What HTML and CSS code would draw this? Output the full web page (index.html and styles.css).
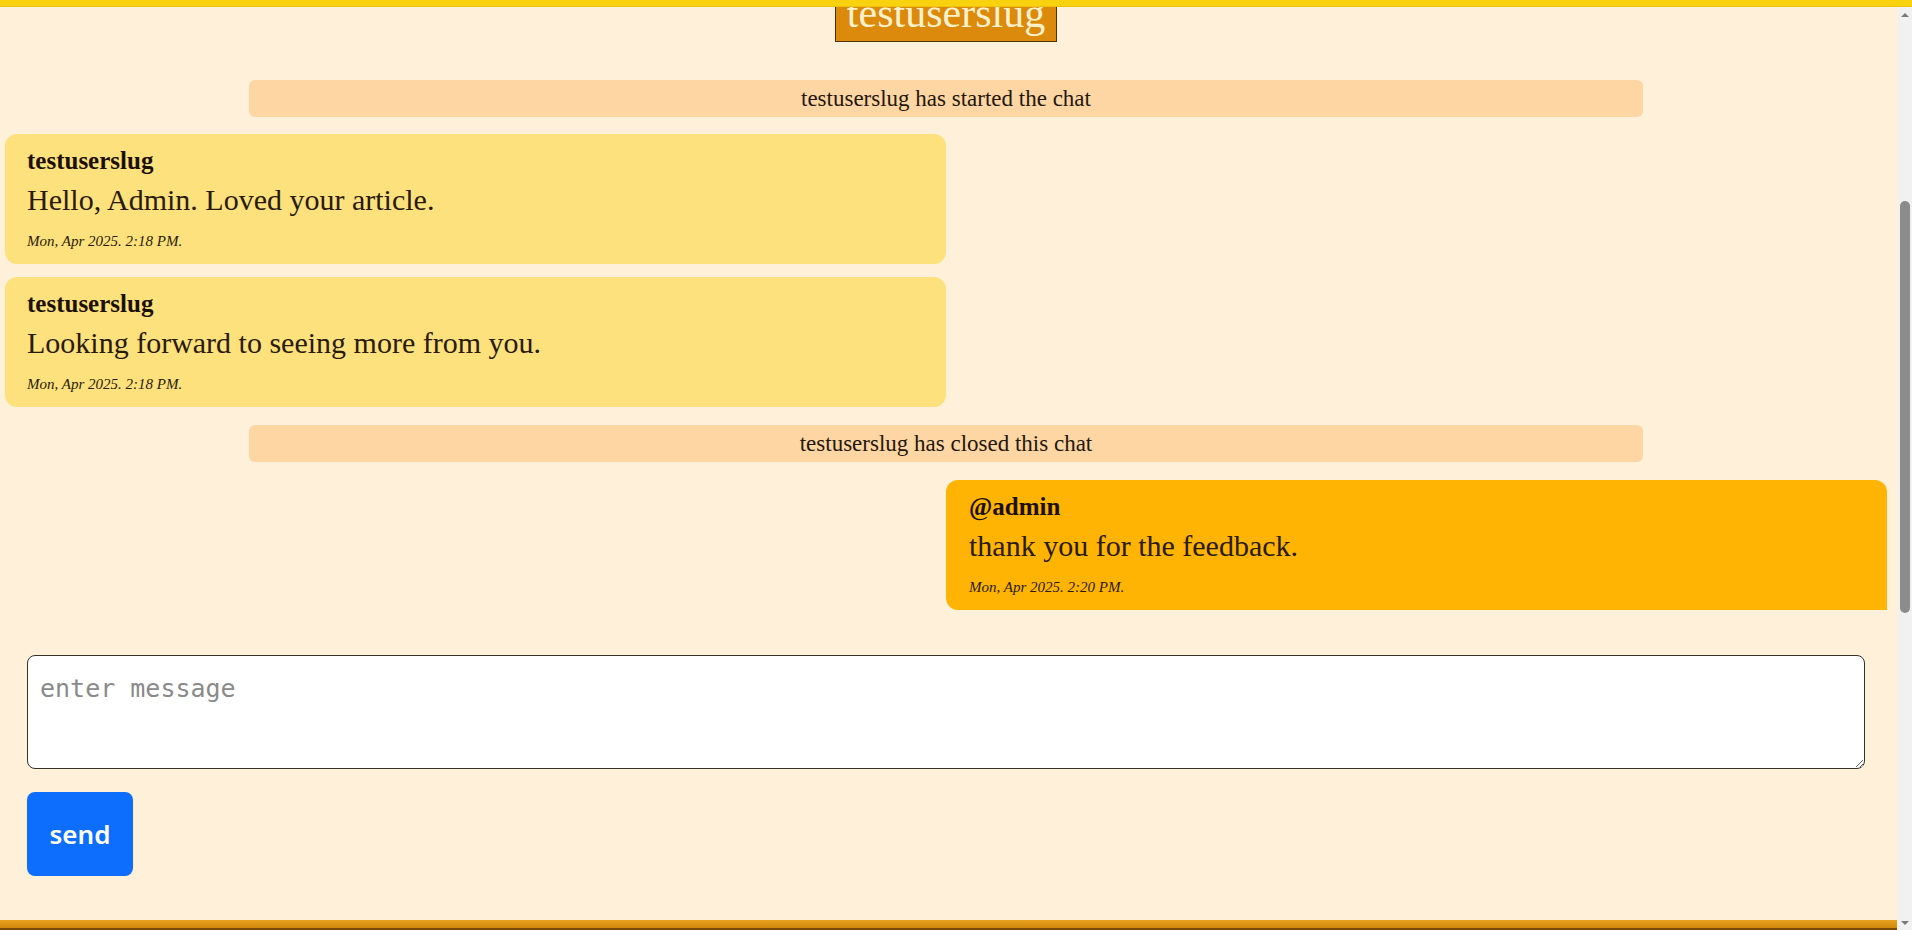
FILE: index.html
```html
<!DOCTYPE html>
<html lang="en">
<head>
<meta charset="utf-8">
<title>Chat - testuserslug</title>
<link rel="stylesheet" href="styles.css">
</head>
<body>
<div class="app">
  <div class="topbar"></div>
  <div class="frame">
    <div class="main">
      <div class="viewport">
        <div class="content">
          <div class="title-wrap"><h1 class="title">testuserslug</h1></div>

          <div class="system first">testuserslug has started the chat</div>

          <div class="bubble left gap-a">
            <div class="name">testuserslug</div>
            <div class="text">Hello, Admin. Loved your article.</div>
            <div class="time">Mon, Apr 2025. 2:18 PM.</div>
          </div>

          <div class="bubble left gap-b">
            <div class="name">testuserslug</div>
            <div class="text">Looking forward to seeing more from you.</div>
            <div class="time">Mon, Apr 2025. 2:18 PM.</div>
          </div>

          <div class="system">testuserslug has closed this chat</div>

          <div class="bubble right gap-a">
            <div class="name">@admin</div>
            <div class="text">thank you for the feedback.</div>
            <div class="time">Mon, Apr 2025. 2:20 PM.</div>
          </div>

          <form class="composer">
            <textarea class="input" placeholder="enter message"></textarea>
            <button type="button" class="send">send</button>
          </form>
        </div>
      </div>
      <div class="bottombar"></div>
    </div>
    <div class="scrollbar">
      <div class="arrow up"></div>
      <div class="track"><div class="thumb"></div></div>
      <div class="arrow down"></div>
    </div>
  </div>
</div>
</body>
</html>
```

FILE: styles.css
```css
* { box-sizing: border-box; }

html, body {
  margin: 0;
  padding: 0;
  height: 100%;
  overflow: hidden;
}

body {
  background: #fff0d9;
  font-family: "Liberation Serif", "Times New Roman", serif;
  color: #2a1a08;
}

.app {
  display: flex;
  flex-direction: column;
  height: 100vh;
}

.topbar {
  height: 7px;
  flex: none;
  background: #f9d20f;
  border-bottom: 1px solid #eec20c;
}

.frame {
  flex: 1;
  display: flex;
  min-height: 0;
}

.main {
  flex: 1;
  display: flex;
  flex-direction: column;
  min-width: 0;
}

.viewport {
  flex: 1;
  overflow: hidden;
  min-height: 0;
}

.content {
  display: flex;
  flex-direction: column;
  padding: 0 10px 0 5px;
}

.title-wrap {
  display: flex;
  justify-content: center;
  margin-top: -21px;
}

.title {
  margin: 0;
  font-weight: normal;
  font-size: 42px;
  line-height: 40px;
  padding: 6px 11px 8px 11px;
  background: #dc8a0b;
  color: #fef1cc;
  border: 1px solid #4d3208;
}

.system {
  align-self: center;
  width: 74.07%;
  height: 37px;
  line-height: 37px;
  text-align: center;
  font-size: 23px;
  background: #fed6a4;
  border-radius: 6px;
  color: #24170a;
  margin-top: 18px;
}

.system.first { margin-top: 38px; }

.bubble {
  width: 50%;
  padding: 12px 22px 13px 22px;
  border-radius: 12px;
}

.bubble.left {
  align-self: flex-start;
  background: #fde17d;
}

.bubble.right {
  align-self: flex-end;
  background: #ffb403;
  border-bottom-right-radius: 0;
  padding-left: 23px;
}

.gap-a { margin-top: 17px; }
.gap-b { margin-top: 13px; }
.bubble.right.gap-a { margin-top: 18px; }

.name {
  font-weight: bold;
  font-size: 25px;
  line-height: 30px;
  color: #1c1005;
}

.text {
  font-size: 30px;
  line-height: 36px;
  margin-top: 6px;
}

.time {
  font-style: italic;
  font-size: 15px;
  line-height: 20px;
  margin-top: 13px;
}

.composer {
  display: flex;
  flex-direction: column;
  align-items: flex-start;
  margin: 45px 22px 0 22px;
}

.input {
  display: block;
  width: 100%;
  height: 114px;
  border: 1.5px solid #35312b;
  border-radius: 8px;
  background: #ffffff;
  padding: 18px 12px 12px 12px;
  font-family: "DejaVu Sans Mono", "Liberation Mono", monospace;
  font-size: 25px;
  color: #222;
  resize: vertical;
}

.input::placeholder {
  color: #8a8a8a;
}

.send {
  margin-top: 23px;
  width: 106px;
  height: 84px;
  border: none;
  border-radius: 8px;
  background: #0d6efd;
  color: #ffffff;
  font-family: "Noto Sans", "Open Sans", sans-serif;
  font-weight: 600;
  font-size: 26px;
  padding: 0;
}

.bottombar {
  flex: none;
  height: 10px;
  background: linear-gradient(#e8a21f, #d1880c);
  border-bottom: 2px solid #7a4a0a;
}

.scrollbar {
  flex: none;
  width: 15px;
  display: flex;
  flex-direction: column;
  background: #f1f1f1;
  border-left: 1px solid #fbf3e6;
}

.arrow {
  height: 15px;
  flex: none;
  display: flex;
  align-items: center;
  justify-content: center;
}

.arrow::before {
  content: "";
  width: 0;
  height: 0;
  border-left: 4px solid transparent;
  border-right: 4px solid transparent;
}

.arrow.up::before { border-bottom: 4px solid #7a7a7a; }
.arrow.down::before { border-top: 4px solid #7a7a7a; }

.track {
  flex: 1;
  display: flex;
  flex-direction: column;
  align-items: center;
}

.thumb {
  width: 10px;
  height: 412px;
  margin-top: 179px;
  background: #8c8c8c;
  border-radius: 5px;
}
```
